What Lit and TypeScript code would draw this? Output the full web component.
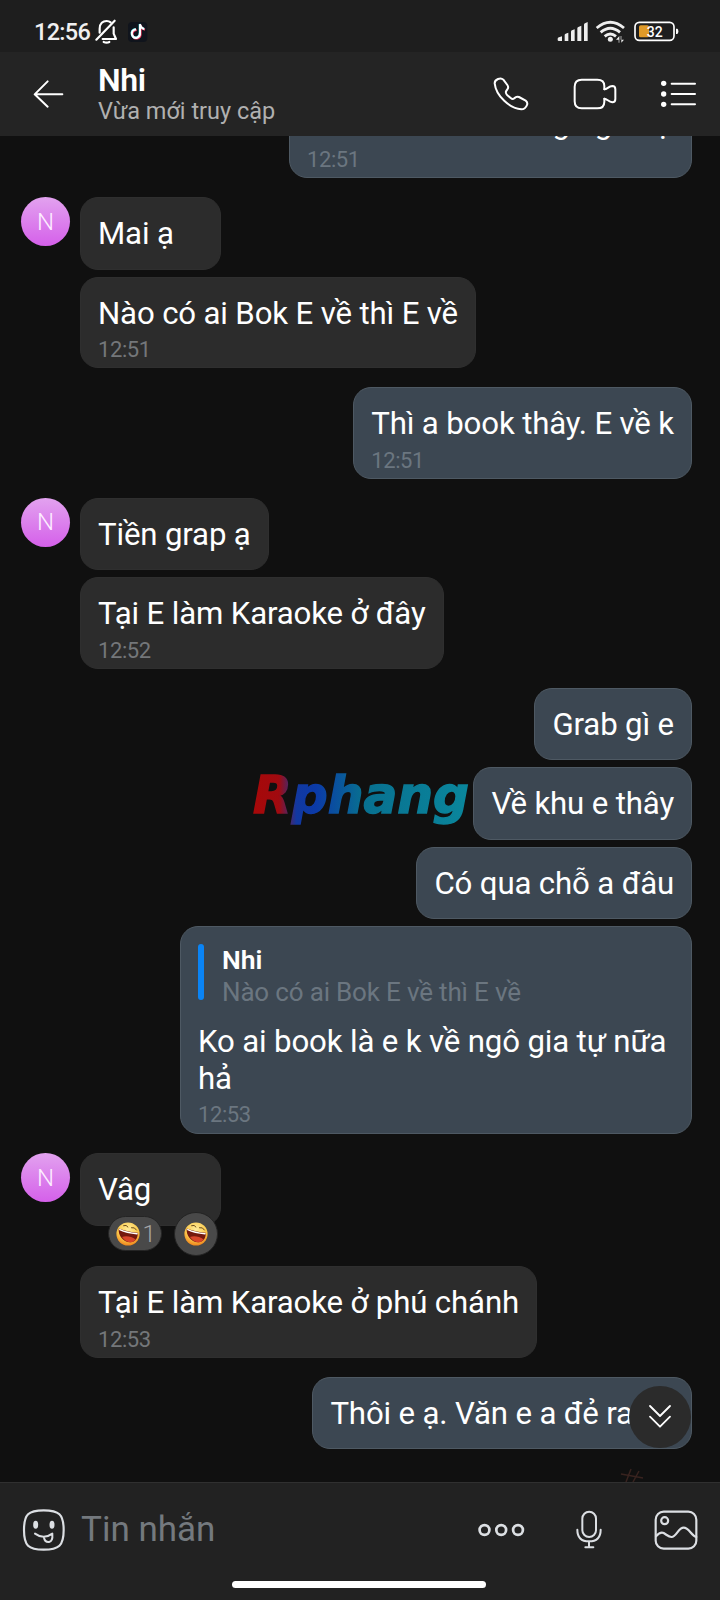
import { LitElement, html, css, nothing } from "lit";
import { customElement, property } from "lit/decorators.js";
import { classMap } from "lit/directives/class-map.js";

interface Message {
  text: string;
  time?: string;
  quote?: { name: string; text: string };
  reaction?: boolean;
  clipped?: string[];
}

interface Group {
  mine: boolean;
  messages: Message[];
}

const groups: Group[] = [
  { mine: true, messages: [{ text: "", clipped: ["g", "g", "ạ"], time: "12:51" }] },
  { mine: false, messages: [{ text: "Mai ạ" }, { text: "Nào có ai Bok E về thì E về", time: "12:51" }] },
  { mine: true, messages: [{ text: "Thì a book thây. E về k", time: "12:51" }] },
  { mine: false, messages: [{ text: "Tiền grap ạ" }, { text: "Tại E làm Karaoke ở đây", time: "12:52" }] },
  {
    mine: true,
    messages: [
      { text: "Grab gì e" },
      { text: "Về khu e thây" },
      { text: "Có qua chỗ a đâu" },
      {
        text: "Ko ai book là e k về ngô gia tự nữa hả",
        time: "12:53",
        quote: { name: "Nhi", text: "Nào có ai Bok E về thì E về" },
      },
    ],
  },
  {
    mine: false,
    messages: [{ text: "Vâg", reaction: true }, { text: "Tại E làm Karaoke ở phú chánh", time: "12:53" }],
  },
  { mine: true, messages: [{ text: "Thôi e ạ. Văn e a đẻ ra nè" }] },
];

const laugh = html`<svg class="emoji" width="24" height="24" viewBox="0 0 24 24">
  <defs>
    <radialGradient id="face" cx=".5" cy=".3" r=".72">
      <stop offset="0" stop-color="#ffec9a" />
      <stop offset=".6" stop-color="#fbcb4e" />
      <stop offset="1" stop-color="#ee7f16" />
    </radialGradient>
  </defs>
  <circle cx="12" cy="12" r="11.6" fill="url(#face)" />
  <path d="M7.600 3.600Q10.500 2.400 12 5M15.500 5.600Q18.800 4.800 20.500 8" fill="none" stroke="#6b4a18" stroke-width="1" stroke-linecap="round" />
  <path d="M2.800 6.400C8.500 8.600 15 10 21.800 10.800C22 16.600 19 20.400 14 20.200C7 19.800 1.800 13.400 2.800 6.400Z" fill="#74180e" />
  <path d="M6 15C9.500 13.600 15.500 14.200 19.600 17.400C18.200 19.400 16.200 20.300 14 20.200C10.800 20 8 18 6 15Z" fill="#d8452a" />
  <path d="M3.800 7.600C8.500 9.800 15 11.200 21 11.800" fill="none" stroke="#fff" stroke-width="1.500" stroke-linecap="round" />
</svg>`;

@customElement("chat-bubble")
class ChatBubble extends LitElement {
  @property({ attribute: false }) message!: Message;
  @property({ type: Boolean }) mine = false;

  static styles = css`
    :host { display: block; max-width: 512px; }
    .bubble {
      box-sizing: border-box;
      position: relative;
      min-width: 141px;
      padding: 18px 17px 16px;
      border: 1px solid #2f2f2f;
      border-radius: 18px;
      background: #2c2c2c;
      color: #fff;
    }
    .mine { background: #3c4752; border-color: #4e5963; min-width: 0; }
    .timed { padding-bottom: 4px; }
    .quoted { padding-top: 17px; padding-bottom: 5px; }
    .text { font-size: 31.2px; line-height: 36.5px; min-height: 36.5px; letter-spacing: -0.15px; }
    .time { margin-top: 5px; font-size: 22px; line-height: 26px; letter-spacing: -0.4px; color: #74777a; }
    .mine .time { color: #6b7680; }
    .clipped { display: flex; justify-content: flex-end; width: 367px; padding-right: 2px; box-sizing: border-box; }
    .g1 { margin-right: 25px; }
    .g2 { margin-right: 43px; }
    .quote { display: flex; gap: 18px; margin-bottom: 16px; height: 64px; }
    .bar { width: 6px; height: 56px; border-radius: 3px; background: #0a84f5; }
    .lines { padding-top: 0; }
    .name { font-size: 26.5px; line-height: 31px; font-weight: 600; }
    .ref { font-size: 26px; line-height: 35px; letter-spacing: -0.17px; color: #6b7680; }
    .pill, .round {
      position: absolute;
      box-sizing: border-box;
      display: flex;
      align-items: center;
      background: #494949;
    }
    .pill { left: 26.5px; top: 62px; width: 54px; height: 35px; padding-left: 7px; gap: 3px; border-radius: 18px; border: 1px solid #242424; }
    .round { left: 93px; top: 58px; width: 44px; height: 44px; justify-content: center; border-radius: 50%; border: 1px solid #242424; }
    .count { font-size: 24px; line-height: 30px; font-weight: 300; color: #a5a5a5; }
    .emoji { flex: none; }
  `;

  render() {
    const m = this.message;
    return html`<div class=${classMap({ bubble: true, mine: this.mine, timed: !!m.time, quoted: !!m.quote })}>
      ${m.quote
        ? html`<div class="quote">
            <div class="bar"></div>
            <div class="lines"><div class="name">${m.quote.name}</div><div class="ref">${m.quote.text}</div></div>
          </div>`
        : nothing}
      ${m.clipped
        ? html`<div class="text clipped">
            <span class="g1">${m.clipped[0]}</span><span class="g2">${m.clipped[1]}</span><span>${m.clipped[2]}</span>
          </div>`
        : html`<div class="text">${m.text}</div>`}
      ${m.time ? html`<div class="time">${m.time}</div>` : nothing}
      ${m.reaction
        ? html`<div class="pill">${laugh}<span class="count">1</span></div>
            <div class="round">${laugh}</div>`
        : nothing}
    </div>`;
  }
}

@customElement("app-root")
class AppRoot extends LitElement {
  static styles = css`
    :host {
      display: flex;
      flex-direction: column;
      width: 720px;
      height: 1600px;
      overflow: hidden;
      position: relative;
      background: #101010;
      color: #fff;
      font-family: Roboto, "Noto Sans", sans-serif;
    }
    svg { display: block; flex: none; }
    .line { fill: none; stroke: #fff; stroke-linecap: round; stroke-linejoin: round; }
    .soft { stroke: #dcdfe3; }
    .status { flex: none; display: flex; height: 52px; background: #1e1e1e; box-sizing: border-box; padding: 16px 0 0 34px; }
    .clock { width: 59px; font-size: 23.5px; line-height: 33px; font-weight: 500; color: #f0f0f0; letter-spacing: -0.7px; }
    .icons { margin-left: auto; }
    .batt { font: 500 14px Roboto, sans-serif; fill: #fff; }
    .header { flex: none; display: flex; align-items: center; height: 84px; background: #242424; padding-left: 32px; box-sizing: border-box; }
    .title { margin-left: 34px; width: 394px; height: 84px; }
    .name { margin-top: 10px; font-size: 32px; line-height: 37px; font-weight: 600; letter-spacing: -0.4px; }
    .seen { font-size: 23.5px; line-height: 26px; color: #b0b0b0; margin-top: -1px; }
    .video { margin-left: 41.5px; }
    .list { margin-left: 42px; }
    .scroll { flex: 1; overflow: hidden; min-height: 0; }
    .flow { display: flex; flex-direction: column; gap: 19px; margin-top: -49.5px; }
    .group { display: flex; padding-left: 21px; padding-right: 28px; }
    .avatar {
      flex: none; width: 49px; height: 49px; border-radius: 50%; margin-right: 10px;
      background: linear-gradient(#e2a2ef, #d560ea);
      display: flex; align-items: center; justify-content: center;
      font-size: 24px; font-weight: 300; color: #fdeeff;
    }
    .stack { flex: 1; display: flex; flex-direction: column; align-items: flex-start; gap: 7px; }
    .own { align-items: flex-end; }
    .reacted { margin-bottom: 33.5px; }
    .composer { flex: none; display: flex; height: 118px; box-sizing: border-box; padding: 0 22px 24px 22px; align-items: center; background: #222; border-top: 1px solid #303030; position: relative; }
    .input { margin-left: 15px; font-size: 35px; line-height: 42px; color: #74797e; flex: 1; }
    .mic { margin-left: 49px; }
    .photo { margin-left: 51px; }
    .home { position: absolute; left: 231.5px; bottom: 12px; width: 254px; height: 7px; border-radius: 4px; background: #fff; }
    .down { position: absolute; left: 629px; top: 1386px; width: 62px; height: 62px; border-radius: 50%; background: #2b2b2b; display: flex; align-items: center; justify-content: center; }
    .mark { position: absolute; left: 249px; top: 755px; }
    .brand { font: italic 700 52px "DejaVu Sans", sans-serif; }
    .hash { position: absolute; left: 618px; top: 1466px; }
  `;

  private statusBar() {
    return html`<div class="status">
      <div class="clock">12:56</div>
      <svg width="56" height="30" viewBox="279 48 168 90">
        <g class="line" stroke-width="6.5">
          <path d="M289 119L344 62" />
          <path d="M299 98V86C299 70 309 63 320 63Q327 63 332 67M341 82V101L348 117H308" />
          <path d="M311 126Q320 130 328 126" />
        </g>
        <rect x="384" y="66" width="58" height="60" rx="12" fill="#10141c" />
        <g fill="none" stroke-width="6">
          <path d="M408 88Q393 91 396 104Q400 116 412 113Q421 109 420 98V73Q423 85 433 87" stroke="#ee3a60" transform="translate(2 2)" />
          <path d="M408 88Q393 91 396 104Q400 116 412 113Q421 109 420 98V73Q423 85 433 87" stroke="#3bdfe6" transform="translate(-1 -1)" />
          <path d="M408 88Q393 91 396 104Q400 116 412 113Q421 109 420 98V73Q423 85 433 87" stroke="#fff" />
        </g>
      </svg>
      <svg class="icons" width="168" height="30" viewBox="576 48 504 90">
        <g fill="#eee">
          <path d="M593 116Q593 113 597 112L606 109V123H597Q593 123 593 120Z" />
          <path d="M614 105Q614 102 617 101L625 98V123H614Z" />
          <path d="M633 95Q633 92 636 91L644 88V123H633Z" />
          <path d="M652 85Q652 82 655 81L664 77V123H652Z" />
          <path d="M672 74Q672 71 675 70L683 66V123H672Z" />
          <circle cx="751" cy="118" r="7.5" />
          <path d="M776 128V119H768L778 108V128ZM782 108V119H792L784 128V108Z" />
        </g>
        <g fill="none" stroke="#eee" stroke-width="8.5">
          <path d="M710 84Q751 50 792 84" />
          <path d="M722 97Q751 72 780 97" />
          <path d="M734 109Q751 95 768 109" />
        </g>
        <rect x="825" y="67" width="117" height="54" rx="13" fill="none" stroke="#fff" stroke-width="5" />
        <rect x="837" y="76" width="30" height="36" rx="5" fill="#e09a28" />
        <path d="M948 86H952Q955 87 955 94Q955 101 952 102H948Z" fill="#fff" />
        <g transform="translate(860 111) scale(3)"><text class="batt" x="0" y="0" textLength="16">32</text></g>
      </svg>
    </div>`;
  }

  private header() {
    return html`<div class="header">
      <svg width="32" height="30" viewBox="96 237 96 90">
        <path class="line" stroke-width="6" d="M187 283H105M143 244L104 283L143 320" />
      </svg>
      <div class="title">
        <div class="name">Nhi</div>
        <div class="seen">Vừa mới truy cập</div>
      </div>
      <svg width="38" height="36" viewBox="396 228 114 108">
        <path class="line" stroke-width="6" d="M414 237Q424 233 430 239L442 255Q447 262 442 268L438 274Q436 280 442 286L453 295Q458 299 464 294Q469 288 477 291L497 302Q504 307 501 315Q496 328 484 328C450 326 408 288 404 250Q404 241 414 237Z" />
      </svg>
      <svg class="video" width="46" height="36" viewBox="636 228 138 108">
        <g class="line" stroke-width="6">
          <path d="M733 268V258Q733 239 712 239H665Q644 239 644 260V304Q644 325 665 325H712Q733 325 733 305V296" />
          <path d="M733 268C742 268 745 259 757 258Q766 258 766 268V297Q766 307 757 307C745 305 742 297 733 296" />
        </g>
      </svg>
      <svg class="list" width="37" height="36" viewBox="900 228 111 108">
        <g fill="#fff"><circle cx="911" cy="250" r="8" /><circle cx="911" cy="282" r="8" /><circle cx="911" cy="313" r="8" /></g>
        <path class="line" stroke-width="6" d="M935 251H1005M935 282H1005M935 313H1005" />
      </svg>
    </div>`;
  }

  private group(g: Group) {
    return html`<div class="group">
      ${g.mine ? nothing : html`<div class="avatar">N</div>`}
      <div class=${classMap({ stack: true, own: g.mine })}>
        ${g.messages.map(
          (m) => html`<chat-bubble class=${classMap({ reacted: !!m.reaction })} .message=${m} ?mine=${g.mine}></chat-bubble>`
        )}
      </div>
    </div>`;
  }

  private composer() {
    return html`<div class="composer">
      <svg width="44" height="44" viewBox="66 174 132 132">
        <path class="line soft" stroke-width="6.5" d="M131 181C177 181 191 193 191 240C191 287 177 299 131 299C85 299 72 287 72 240C72 193 85 181 131 181Z" />
        <g fill="#dcdfe3"><ellipse cx="107" cy="224" rx="7.5" ry="12" /><ellipse cx="156" cy="224" rx="7.5" ry="12" /></g>
        <path class="line soft" stroke-width="6" d="M105 251Q131 270 157 251M132 263Q134 277 147 276Q159 273 157 253" />
      </svg>
      <div class="input">Tin nhắn</div>
      <svg width="48" height="20" viewBox="0 0 48 20">
        <g class="line soft" stroke-width="2.7"><circle cx="6.5" cy="10" r="4.9" /><circle cx="23.2" cy="10" r="4.9" /><circle cx="40" cy="10" r="4.9" /></g>
      </svg>
      <svg class="mic" width="28" height="42" viewBox="824 450 84 126">
        <g class="line soft" stroke-width="6">
          <rect x="846" y="458" width="41" height="76" rx="20.5" />
          <path d="M831 512Q831 547 866 547Q901 547 901 512M866 547V565M855 565H879" />
        </g>
      </svg>
      <svg class="photo" width="44" height="42" viewBox="1063 447 132 126">
        <g class="line soft" stroke-width="6.5">
          <rect x="1068" y="455" width="122" height="111" rx="24" />
          <circle cx="1095" cy="482" r="10.5" />
          <path d="M1069 529Q1082 514 1092 519C1102 525 1108 532 1116 531C1130 530 1136 503 1152 503C1168 503 1174 526 1190 531" />
        </g>
      </svg>
      <div class="home"></div>
    </div>`;
  }

  render() {
    return html`
      ${this.statusBar()} ${this.header()}
      <div class="scroll"><div class="flow">${groups.map((g) => this.group(g))}</div></div>
      ${this.composer()}
      <div class="down">
        <svg width="26" height="28" viewBox="1042 134 78 84">
          <path class="line" stroke-width="5.5" d="M1051 143L1081 173L1111 143M1051 175L1081 205L1111 175" />
        </svg>
      </div>
      <svg class="mark" width="226" height="84" viewBox="-2 -10 226 84">
        <defs>
          <linearGradient id="ink" gradientUnits="userSpaceOnUse" x1="0" y1="0" x2="216" y2="0">
            <stop offset="0" stop-color="#a80808" /><stop offset=".13" stop-color="#a00a10" />
            <stop offset=".21" stop-color="#1238a0" /><stop offset=".3" stop-color="#0b3aa8" />
            <stop offset=".52" stop-color="#087090" /><stop offset="1" stop-color="#0a869c" />
          </linearGradient>
        </defs>
        <text class="brand" x="2" y="48" textLength="216" lengthAdjust="spacingAndGlyphs" fill="url(#ink)" stroke="url(#ink)" stroke-width="1.5">Rphang</text>
      </svg>
      <svg class="hash" width="28" height="16" viewBox="0 0 28 16">
        <path d="M3 8L25 12M13 3L8 16M21 5L15 16" fill="none" stroke="#38231f" stroke-width="1.5" />
      </svg>
    `;
  }
}
